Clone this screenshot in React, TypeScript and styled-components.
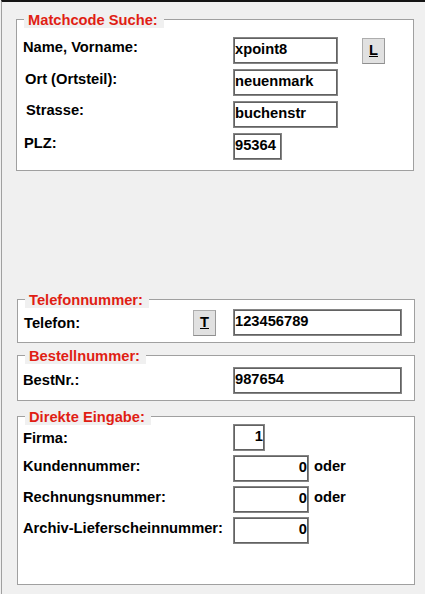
import { createGlobalStyle } from "styled-components";
import styled from "styled-components";

const GlobalStyle = createGlobalStyle`
  html, body {
    margin: 0;
    padding: 0;
    background: #f0f0f0;
  }
  body {
    font-family: "Liberation Sans", Arial, sans-serif;
    font-size: 14.7px;
    font-weight: bold;
    color: #000;
  }
`;

export default function App() {
  return (
    <>
      <GlobalStyle />
      <Page>
        <Group $mt={0}>
          <Legend>Matchcode Suche:</Legend>
          <Body $mt={9} $pb={10} $gap={5}>
            <Row>
              <Label $w={216} $pl={6} $pt={1.5}>Name, Vorname:</Label>
              <Input $w={105} defaultValue="xpoint8" />
              <SmallButton $ml={24} type="button">
                <u>L</u>
              </SmallButton>
            </Row>
            <Row>
              <Label $w={216} $pl={8} $pt={1.5}>Ort (Ortsteil):</Label>
              <Input $w={105} defaultValue="neuenmark" />
            </Row>
            <Row>
              <Label $w={216} $pl={9} $pt={0.5}>Strasse:</Label>
              <Input $w={105} defaultValue="buchenstr" />
            </Row>
            <Row>
              <Label $w={216} $pl={7} $pt={1.5}>PLZ:</Label>
              <Input $w={49} defaultValue="95364" />
            </Row>
          </Body>
        </Group>

        <Group $mt={128} $shift={1}>
          <Legend>Telefonnummer:</Legend>
          <Body $mt={1} $pb={6} $gap={0}>
            <Row>
              <Label $w={175} $pl={6} $pt={5.5}>Telefon:</Label>
              <SmallButton $mr={17} type="button">
                <u>T</u>
              </SmallButton>
              <Input $w={169} defaultValue="123456789" />
            </Row>
          </Body>
        </Group>

        <Group $mt={12} $shift={1}>
          <Legend>Bestellnummer:</Legend>
          <Body $mt={3} $pb={6} $gap={0}>
            <Row>
              <Label $w={215} $pl={5} $pt={4.5}>BestNr.:</Label>
              <Input $w={169} defaultValue="987654" />
            </Row>
          </Body>
        </Group>

        <Group $mt={15} $shift={1}>
          <Legend>Direkte Eingabe:</Legend>
          <Body $mt={-1} $pb={40} $gap={4}>
            <Row>
              <Label $w={215} $pl={5} $pt={6}>Firma:</Label>
              <Input $w={32} $right defaultValue="1" />
            </Row>
            <Row>
              <Label $w={215} $pl={5} $pt={2.5}>Kundennummer:</Label>
              <Input $w={76} $right defaultValue="0" />
              <Note $pt={2.5}>oder</Note>
            </Row>
            <Row>
              <Label $w={215} $pl={5} $pt={3}>Rechnungsnummer:</Label>
              <Input $w={76} $right defaultValue="0" />
              <Note $pt={3}>oder</Note>
            </Row>
            <Row>
              <Label $w={215} $pl={5} $pt={3}>Archiv-Lieferscheinnummer:</Label>
              <Input $w={76} $right defaultValue="0" />
            </Row>
          </Body>
        </Group>
      </Page>
    </>
  );
}

const Page = styled.div`
  box-sizing: border-box;
  min-height: 100vh;
  margin-left: 1px;
  border-left: 1px solid #a0a0a0;
  border-top: 2px solid #141414;
  padding: 17px 0 0 14px;
`;

const Group = styled.div<{ $mt: number; $shift?: number }>`
  box-sizing: border-box;
  width: 398px;
  margin-top: ${(p) => p.$mt}px;
  margin-left: ${(p) => p.$shift ?? 0}px;
  border: 1px solid #a0a0a0;
  background: #fff;
  display: flex;
  flex-direction: column;
`;

const Legend = styled.div`
  align-self: flex-start;
  height: 16px;
  line-height: 16px;
  margin: -8px 0 0 7px;
  padding: 0 6px 0 4px;
  background: #f0f0f0;
  color: #e01e14;
  white-space: nowrap;
`;

const Body = styled.div<{ $mt: number; $pb: number; $gap: number }>`
  display: flex;
  flex-direction: column;
  gap: ${(p) => p.$gap}px;
  margin-top: ${(p) => p.$mt}px;
  padding-bottom: ${(p) => p.$pb}px;
`;

const Row = styled.div`
  display: flex;
  align-items: flex-start;
  height: 27px;
`;

const Label = styled.div<{ $w: number; $pl: number; $pt: number }>`
  box-sizing: border-box;
  flex: 0 0 ${(p) => p.$w}px;
  padding: ${(p) => p.$pt}px 0 0 ${(p) => p.$pl}px;
  line-height: 16px;
  white-space: nowrap;
`;

const Input = styled.input<{ $w: number; $right?: boolean }>`
  box-sizing: border-box;
  width: ${(p) => p.$w}px;
  height: 27px;
  margin: 0;
  padding: 0 1px 4px 1px;
  border: 1px solid #858585;
  box-shadow: inset 0 0 0 1px #626262;
  border-radius: 0;
  background: #fff;
  font: inherit;
  color: #000;
  text-align: ${(p) => (p.$right ? "right" : "left")};
  outline: none;
`;

const SmallButton = styled.button<{ $ml?: number; $mr?: number }>`
  box-sizing: border-box;
  width: 23px;
  height: 26px;
  margin: 1px ${(p) => p.$mr ?? 0}px 0 ${(p) => p.$ml ?? 0}px;
  padding: 0 0 3px;
  border: 1px solid #adadad;
  border-bottom-color: #8f8f8f;
  border-right-color: #9a9a9a;
  border-radius: 0;
  background: #e1e1e1;
  font: inherit;
  color: #000;
  line-height: 16px;
`;

const Note = styled.span<{ $pt: number }>`
  margin-left: 5px;
  padding-top: ${(p) => p.$pt}px;
  line-height: 16px;
`;
